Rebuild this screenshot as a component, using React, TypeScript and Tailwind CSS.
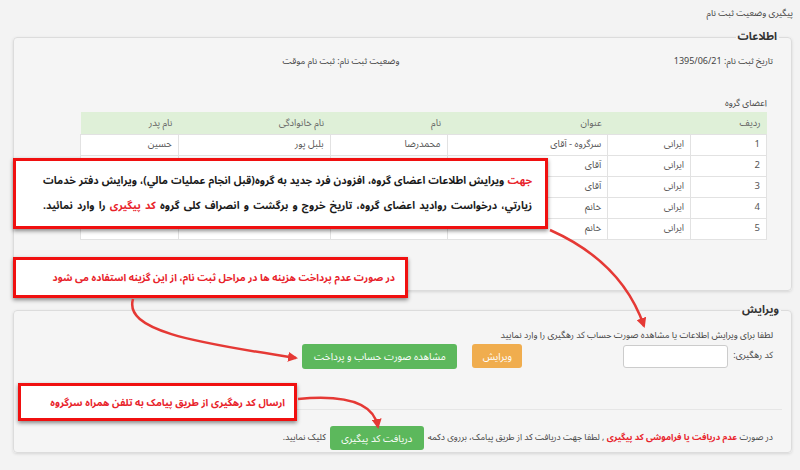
import React from 'react';

const ROWS = [
  ['1', 'ایرانی', 'سرگروه - آقای', 'محمدرضا', 'بلبل پور', 'حسین'],
  ['2', 'ایرانی', 'آقای', '', '', ''],
  ['3', 'ایرانی', 'آقای', '', '', ''],
  ['4', 'ایرانی', 'خانم', '', '', ''],
  ['5', 'ایرانی', 'خانم', '', '', ''],
];

const HEAD = ['ردیف', '', 'عنوان', 'نام', 'نام خانوادگی', 'نام پدر'];
const WIDTHS = ['w-[76px]', 'w-[83px]', 'w-[161px]', 'w-[117px]', 'w-[152px]', 'w-[98px]'];

export default function App() {
  return (
    <div dir="rtl" className="relative w-[800px] h-[470px] overflow-hidden bg-[#f3f3f3] font-['Noto_Sans_Arabic','DejaVu_Sans',sans-serif] text-[#333]">
      <div className="pt-[6px] pr-[7px] text-[9px] leading-[16px] text-[#444]">پیگیری وضعیت ثبت نام</div>

      {/* اطلاعات */}
      <fieldset className="mt-[6px] mr-[8px] ml-[13px] h-[263px] border border-[#dcdcdc] rounded-[4px] bg-[#f5f5f5] shadow-[0_1px_3px_rgba(0,0,0,0.12)]">
        <legend className="mr-[12px] px-[2px] text-[11px] leading-[18px] font-bold text-[#333]">اطلاعات</legend>
        <div className="grid grid-cols-2 pt-[8px] text-[9px] leading-[16px] text-[#444]">
          <div className="pr-[18px]">تاریخ ثبت نام: 1395/06/21</div>
          <div className="pr-[3px]">وضعیت ثبت نام: ثبت نام موقت</div>
        </div>
        <div className="pr-[24px] mt-[27px] text-[9px] leading-[14px] text-[#444]">اعضای گروه</div>
        <table className="mr-[24px] mt-[1px] w-[687px] border-collapse text-[9.5px] text-[#555]">
          <thead>
            <tr className="h-[22px] bg-[#dff0d8]">
              {HEAD.map((h, i) => (
                <th key={i} className={`${WIDTHS[i]} px-[6px] text-right font-normal text-[#666]`}>{h}</th>
              ))}
            </tr>
          </thead>
          <tbody>
            {ROWS.map((r) => (
              <tr key={r[0]} className="h-[21px] bg-white">
                {r.map((c, i) => (
                  <td key={i} className="px-[6px] text-right border border-[#e2e2e2]">{c}</td>
                ))}
              </tr>
            ))}
          </tbody>
        </table>
      </fieldset>

      {/* ویرایش */}
      <fieldset className="mt-[10px] mr-[8px] ml-[13px] h-[152px] border border-[#dcdcdc] rounded-[4px] bg-[#f5f5f5] shadow-[0_1px_3px_rgba(0,0,0,0.12)]">
        <legend className="mr-[10px] px-[2px] text-[11px] leading-[18px] font-bold text-[#333]">ویرایش</legend>
        <div className="pr-[18px] pt-[10px] text-[9px] leading-[14px] text-[#444] whitespace-nowrap">لطفا برای ویرایش اطلاعات یا مشاهده صورت حساب کد رهگیری را وارد نمایید</div>
        <div className="flex items-center pr-[18px] mt-[0px] h-[26px]">
          <span className="text-[9px] text-[#444] whitespace-nowrap">کد رهگیری:</span>
          <input className="mr-[5px] w-[105px] h-[23px] bg-white border border-[#ccc] rounded-[3px]" />
          <button className="mr-[101px] w-[50px] h-[24px] rounded-[3px] bg-[#f0ad4e] text-white text-[10px]">ویرایش</button>
          <button className="mr-[15px] w-[155px] h-[25px] rounded-[3px] bg-[#5cb85c] text-white text-[10px] whitespace-nowrap">مشاهده صورت حساب و پرداخت</button>
        </div>
        <div className="mx-[9px] mt-[40px] border-t border-[#e6e6e6]" />
        <div className="flex items-center pr-[18px] mt-[16px] text-[8.75px] text-[#444] whitespace-nowrap">
          <span>
            در صورت <span className="font-bold text-[#e8232b]">عدم دریافت یا فراموشی کد پیگیری</span> , لطفا جهت دریافت کد از طریق پیامک، برروی دکمه
          </span>
          <button className="mx-[4px] w-[94px] h-[24px] rounded-[3px] bg-[#5cb85c] text-white text-[10px]">دریافت کد پیگیری</button>
          <span>کلیک نمایید.</span>
        </div>
      </fieldset>

      {/* callouts */}
      <div className="absolute left-[13px] top-[158px] w-[535px] h-[71px] bg-white border-[3px] border-[#f01010] shadow-[0_2px_4px_rgba(0,0,0,0.45)] pr-[13px] pl-[27px] pt-[8px] text-[10.5px] leading-[25px] font-bold text-[#1a1a1a] whitespace-nowrap">
        <div className="text-justify [text-align-last:justify]"><span className="text-[#e8232b]">جهت</span> ویرایش اطلاعات اعضای گروه، افزودن فرد جدید به گروه(قبل انجام عملیات مالي)، ویرایش دفتر خدمات</div>
        <div className="text-justify [text-align-last:justify]">زیارتي، درخواست روادید اعضای گروه، تاریخ خروج و برگشت و انصراف کلی گروه <span className="text-[#e8232b]">کد پیگیری</span> را وارد نمائید.</div>
      </div>
      <div className="absolute left-[13px] top-[257px] w-[395px] h-[41px] bg-white border-[3px] border-[#f01010] shadow-[0_2px_4px_rgba(0,0,0,0.45)] flex items-center pr-[10px] text-[10px] font-bold text-[#e8232b] whitespace-nowrap">
        در صورت عدم پرداخت هزینه ها در مراحل ثبت نام، از این گزینه استفاده می شود
      </div>
      <div className="absolute left-[18px] top-[383px] w-[279px] h-[38px] bg-white border-[3px] border-[#f01010] shadow-[0_2px_4px_rgba(0,0,0,0.45)] flex items-center pr-[9px] text-[10px] font-bold text-[#e8232b] whitespace-nowrap">
        ارسال کد رهگیری از طریق پیامک به تلفن همراه سرگروه
      </div>

      {/* arrows */}
      <svg className="absolute inset-0 pointer-events-none" width="800" height="470" viewBox="0 0 800 470">
        <defs>
          <marker id="ah" viewBox="0 0 10 10" refX="8" refY="5" markerWidth="4" markerHeight="4" orient="auto-start-reverse">
            <path d="M0,0 L10,5 L0,10 z" fill="#e53935" />
          </marker>
        </defs>
        <path d="M550,230 Q622,262 644,326" fill="none" stroke="#e53935" strokeWidth="2.5" markerEnd="url(#ah)" />
        <path d="M133,299 C124,330 190,342 296,358" fill="none" stroke="#e53935" strokeWidth="2.5" markerEnd="url(#ah)" />
        <path d="M298,399 Q372,392 378,427" fill="none" stroke="#e53935" strokeWidth="2.5" markerEnd="url(#ah)" />
      </svg>
    </div>
  );
}
